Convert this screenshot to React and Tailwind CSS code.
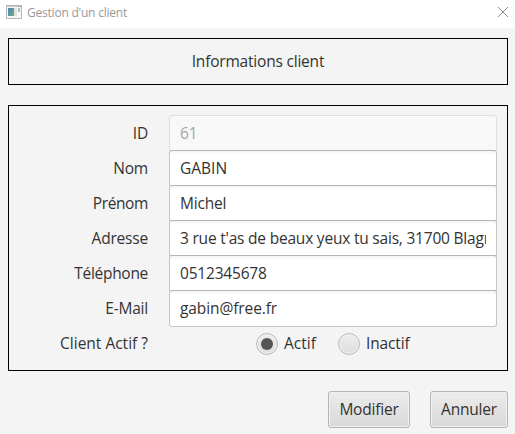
import React from "react";

function Field({ label, labelClass = "", value, valueClass = "", disabled = false }) {
  return (
    <div className="flex h-[35px] items-start">
      <div className="w-[139px] shrink-0 text-right leading-[36px]">
        <span className={labelClass}>{label}</span>
      </div>
      <div
        className={`ml-[21px] h-[37px] w-[328px] rounded-[3px] border px-[10px] leading-[34px] ${
          disabled
            ? "border-[#dedede] bg-[#f8f8f8] text-[#a5a5a5]"
            : "border-[#c6c6c6] border-t-[#b5b5b5] bg-linear-to-b from-[#f4f4f4] to-white to-[4px]"
        }`}
      >
        <div className="overflow-hidden whitespace-nowrap">
          <span className={valueClass}>{value}</span>
        </div>
      </div>
    </div>
  );
}

function Radio({ checked, children }) {
  return (
    <div className="flex items-start gap-[6px]">
      <span className="mt-2 flex size-[22px] items-center justify-center rounded-full border border-[#bababa] bg-linear-to-b from-[#ededed] to-[#dddddd] shadow-[inset_0_0_0_1px_#f3f3f3]">
        {checked && <span className="size-3 rounded-full bg-[#555555]" />}
      </span>
      {children}
    </div>
  );
}

function Button({ className, children }) {
  return (
    <button
      className={`flex h-[37px] items-start justify-center rounded-[3px] border border-[#b5b5b5] bg-linear-to-b from-[#ececec] to-[#d9d9d9] leading-[34px] shadow-[inset_0_0_0_1px_#f0f0f0] ${className}`}
    >
      {children}
    </button>
  );
}

export default function App() {
  return (
    <div className="h-[434px] w-[515px] overflow-hidden bg-[#f4f4f4] font-['Open_Sans',sans-serif] text-[15.5px] tracking-[-0.2px] text-[#333333]">
      <header className="flex h-7 items-center bg-white px-[6px]">
        <svg width="16" height="14" viewBox="0 0 16 14" className="-mt-1">
          <defs>
            <linearGradient id="pane" x1="0" y1="0" x2="1" y2="1">
              <stop offset="0" stopColor="#5a7fae" />
              <stop offset="1" stopColor="#62b387" />
            </linearGradient>
          </defs>
          <rect x="0.5" y="0.5" width="15" height="13" fill="#f7f7f7" stroke="#b3b8bc" />
          <path d="M1 1.5h14" stroke="#c6cbd0" />
          <rect x="2" y="3" width="6" height="8" fill="url(#pane)" />
          <rect x="8" y="3" width="3" height="8" fill="#e2e2e2" />
          <rect x="12" y="3" width="2" height="4" fill="#9fbfc8" />
          <path d="M12 1.5h1M14 1.5h1" stroke="#7c9cb8" />
        </svg>
        <span className="-mt-[2px] ml-[5px] text-[12px] leading-4 tracking-[-0.22px] text-[#999999]">
          Gestion d'un client
        </span>
        <svg width="12" height="12" viewBox="0 0 12 12" className="-mt-1 ml-auto">
          <path d="M1 1l10 10M11 1L1 11" stroke="#8c8c8c" strokeWidth="1" />
        </svg>
      </header>

      <section className="mt-[10px] mr-[7px] ml-2 flex h-[47px] items-start justify-center border border-black">
        <h1 className="leading-[44px]">Informations client</h1>
      </section>

      <section className="mt-5 mr-[7px] ml-2 h-[266px] border border-black pt-[9px]">
        <Field label="ID" value="61" disabled />
        <Field label="Nom" value="GABIN" valueClass="tracking-[0px]" />
        <Field label="Prénom" labelClass="tracking-[-0.4px]" value="Michel" />
        <Field
          label="Adresse"
          value="3 rue t'as de beaux yeux tu sais, 31700 Blagnac"
          valueClass="tracking-[-0.21px]"
        />
        <Field label="Téléphone" labelClass="tracking-[-0.3px]" value="0512345678" />
        <Field label="E-Mail" value="gabin@free.fr" valueClass="tracking-[-0.1px]" />
        <div className="flex h-[36px] items-start leading-[36px]">
          <div className="w-[139px] text-right tracking-[0px]">Client Actif ?</div>
          <div className="ml-[108px] flex">
            <div className="w-[82px]">
              <Radio checked>
                <span className="tracking-[0px]">Actif</span>
              </Radio>
            </div>
            <Radio>
              <span className="tracking-[-0.15px]">Inactif</span>
            </Radio>
          </div>
        </div>
      </section>

      <footer className="mt-5 flex justify-end gap-5 pr-[7px]">
        <Button className="w-[82px]">
          <span>Modifier</span>
        </Button>
        <Button className="w-[78px]">
          <span>Annuler</span>
        </Button>
      </footer>
    </div>
  );
}
